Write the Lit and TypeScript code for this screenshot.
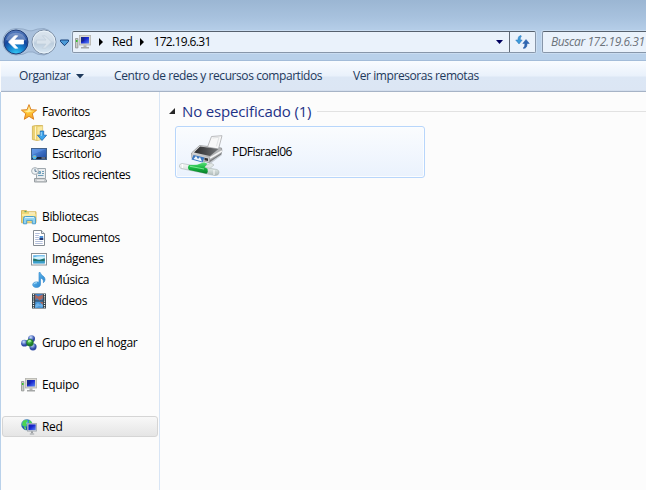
import { LitElement, html, css, svg, nothing } from "lit";
import { customElement, property } from "lit/decorators.js";

const monitor = svg`
  <path d="M.5 4.500h2.400v9.400H.5z" fill="#c9cbc7" stroke="#8e918f" stroke-width=".8"/>
  <path d="M1 6h1.500v2H1z" fill="#35c52b"/>
  <rect x="4.400" y="1.400" width="11.200" height="9.600" fill="#d9d7cf" stroke="#b3b3ae" stroke-width=".8"/>
  <rect x="6" y="3" width="8" height="6.500" fill="url(#scr)"/>
  <path d="M6 3h3.200v3.900L6 8z" fill="#1a2a8c"/>
  <path d="M8.500 11.300h3V13h-3z" fill="#b5b5b0"/><path d="M6 13h8v1.500H6z" fill="#a5a7a7"/>`;

const icons: Record<string, unknown> = {
  star: svg`<path d="M8 .6l2 5.100 5.600.4-4.300 3.600 1.400 5.600L8 12.300l-4.700 3 1.400-5.600L.4 6.100 6 5.700z" fill="url(#gold)" stroke="#dd8422" stroke-width="1" stroke-linejoin="round"/><path d="M8 3.200l1.200 3.500 3 .3-5.400 1.500-3.300-1.400 3.200-.4z" fill="#fff3ae" opacity=".85"/>`,
  downloads: svg`<path d="M1.400 1.200L4.500.500h7.100v13.800l-5.600 1.200-4.600-1z" fill="#ecd274" stroke="#cfb050" stroke-width=".8"/><path d="M6.500 2.200l5-1v12.500l-5 1.500z" fill="#f9e9a0"/><path d="M4.500 1.500v13" stroke="#fff5c7"/><path d="M9.300 6h3.400v4.200h2.900L11 15.500l-4.600-5.300h2.900z" fill="#3ba4ec" stroke="#1c67b3" stroke-width=".8"/><path d="M10.200 7v4" stroke="#a2dbff"/>`,
  desktop: svg`<rect x=".5" y="2.500" width="15" height="11" fill="url(#desk)" stroke="#44638b"/><path d="M1 11h14v2H1z" fill="#17243e"/><path d="M1 3h14L1 9z" fill="#76aaf2" opacity=".4"/><circle cx="3.500" cy="11.200" r="2.100" fill="#4bbdf0"/><path d="M2.200 11.200h1V9.600zM3.500 10h1.300v1.200z" fill="#ff9e37"/><path d="M10.500 12h4" stroke="#c7d3e3" stroke-width=".8"/>`,
  recent: svg`<path d="M5.500 1.500h9v10h-9z" fill="#e9ecee" stroke="#9ea7ad"/><path d="M3.500 11.500h10l2 1.500v2h-12z" fill="#c9cdd0" stroke="#999fa3"/><path d="M7.500 4.500h2v2h-2z" stroke="#6c9db9" fill="#8fb9d1"/><path d="M7 8.500h5.500M11 4.500h2M11 6.500h2" stroke="#6c9db9"/><circle cx="4" cy="4" r="3.400" fill="#f0f4f6" stroke="#a8b0b6"/><path d="M4 1.800V4.300h1.800" fill="none" stroke="#4d6c88" stroke-width=".9"/><path d="M6 13.300h7" stroke="#f5f5f5"/>`,
  libraries: svg`<path d="M.5 4V1.600h5l1 1.200h8.500v11H.5z" fill="#f1d978" stroke="#d5b863"/><path d="M1 5h13.500v2H1z" fill="#fbeca4"/><path d="M3.500 2.700h2" stroke="#3b9c67"/><path d="M8 4h6" stroke="#fff"/><path d="M2.500 14.800V9.300Q2.500 7.500 4.500 7.500h8q2 0 2 1.800v5.500h-3.200v-3.400H5.700v3.400z" fill="#91d2ef" stroke="#4d9fcd"/><path d="M4 8.600h9" stroke="#dcf6ff"/>`,
  documents: svg`<path d="M2.500.5h8l3 3v12h-11z" fill="#fff" stroke="#858c93"/><path d="M10.500.5v3h3" fill="#dfe8f0" stroke="#858c93"/><path d="M4.200 3.500h4.600M4.200 5.500h3.600M4.200 7.500h3.600M4.200 9.500h3.600M4.200 11.500h7.500M4.200 13.500h7.500" stroke="#a9b7d6" stroke-width=".9"/><rect x="8.600" y="6" width="3.600" height="4" fill="#4d8fd8"/><path d="M8.600 8h3.600v2H8.600z" fill="#243a73"/>`,
  pictures: svg`<rect x=".5" y="2.500" width="15" height="11.500" fill="#fff" stroke="#8b9196"/><rect x="2.200" y="4.200" width="11.600" height="8.200" fill="#5fb4ea"/><path d="M2.200 6.500Q8 4.500 13.800 5.500v2L8 8.500 2.200 8z" fill="#d6f3fb"/><path d="M2.200 7.600c3 .3 3.500 1.400 6 1.400 2.200 0 3.500-1.700 5.600-1.400v2.800H2.200z" fill="#257468"/><path d="M2.200 10.300h11.600v2.100H2.200z" fill="#3b9fcb"/>`,
  music: svg`<path d="M8 .5h1.200c.4 3 4.500 3.300 4.800 6.500.1 1.400-.5 2.800-1.600 3.700.5-2.700-.8-4-2.900-4.700v6.200c0 2.200-1.900 3.300-4 3.300-2 0-3.800-1-3.800-2.800 0-2.300 3.500-3.500 6.300-2.400z" fill="url(#note)" stroke="#3d8fd0" stroke-width=".7"/><path d="M3 12.200c.5-1 1.900-1.500 3-1.400" stroke="#b7e8ff" fill="none"/>`,
  videos: svg`<rect x="1" y=".5" width="14" height="15" fill="#33414a"/><path d="M2.500 1v14M13.500 1v14" stroke="#e8eef0" stroke-width="1.200" stroke-dasharray="1.200 1"/><rect x="4.200" y="1" width="7.600" height="6.500" fill="#3e80c6"/><rect x="4.200" y="8.500" width="7.600" height="6.500" fill="#4a97d8"/><path d="M4.200 1.500l3 2 4.600-2v4L8.500 7.500 6 5 4.200 7z" fill="#b0685c"/><path d="M4.200 12l2.800-2 2 2 2.800-2v4l-3.800-1-3.800 2z" fill="#6fb4ea"/><path d="M9 9h2.800v3z" fill="#ad6251"/>`,
  homegroup: svg`<circle cx="10.500" cy="3.700" r="3.500" fill="url(#ball)"/><circle cx="3.500" cy="8.200" r="3.400" fill="url(#ball)"/><circle cx="12" cy="11.800" r="3.600" fill="url(#ball)"/><circle cx="8.900" cy="7.700" r="3.500" fill="url(#green)" stroke="#26742e" stroke-width=".5"/><path d="M7.200 6.300q1.500-1.500 3 0" stroke="#d1ffc1" fill="none"/>`,
  computer: monitor,
  network: svg`<circle cx="5.800" cy="5.700" r="5.300" fill="url(#globe)" stroke="#3976a8" stroke-width=".5"/><path d="M2 2q3-2 5 0L5 4l1 2-2 2-3-2zM8 1q3 1 3 4L8 4z" fill="#4bd351"/><path d="M3 8l2 .5v2.300q-2-.5-2-2.800z" fill="#70dc61"/><rect x="6.500" y="4.500" width="9" height="7.600" fill="#d6d9da" stroke="#9da5ab" stroke-width=".8"/><rect x="7.400" y="5.400" width="7.300" height="5.700" fill="url(#scr)"/><path d="M10 12.300h2v2h-2z" fill="#9ca0a4"/><path d="M8.800 15h4.400" stroke="#9ca0a4"/>`,
};

@customElement("shell-icon")
export class ShellIcon extends LitElement {
  @property() name = "";
  static styles = css`
    :host { display: block; width: 16px; height: 16px; flex: none; }
    svg { display: block; }
  `;
  render() {
    return html`<svg width="16" height="16" viewBox="0 0 16 16">
      <defs>
        <linearGradient id="gold" x2="0" y2="1"><stop stop-color="#fff0a0"/><stop offset=".55" stop-color="#ffc634"/><stop offset="1" stop-color="#f39a25"/></linearGradient>
        <linearGradient id="desk" x2="1" y2="1"><stop stop-color="#5c93e6"/><stop offset="1" stop-color="#1c4aa0"/></linearGradient>
        <linearGradient id="scr" x2="1" y2="1"><stop stop-color="#1020a0"/><stop offset=".45" stop-color="#1928cf"/><stop offset="1" stop-color="#5d86f4"/></linearGradient>
        <linearGradient id="note" x2="1" y2="1"><stop stop-color="#72c7f5"/><stop offset="1" stop-color="#1c78c7"/></linearGradient>
        <radialGradient id="ball" cx=".4" cy=".3"><stop stop-color="#d8e5ff"/><stop offset=".45" stop-color="#7e9bdb"/><stop offset="1" stop-color="#2f48a5"/></radialGradient>
        <radialGradient id="green" cx=".4" cy=".3"><stop stop-color="#a9f29a"/><stop offset=".5" stop-color="#3eae42"/><stop offset="1" stop-color="#1c7a2d"/></radialGradient>
        <radialGradient id="globe" cx=".35" cy=".3"><stop stop-color="#aeeefe"/><stop offset=".5" stop-color="#3da7e1"/><stop offset="1" stop-color="#1554a8"/></radialGradient>
      </defs>${icons[this.name] ?? nothing}</svg>`;
  }
}

interface Item { icon: string; label: string; cls?: string; }
const groups: Item[][] = [
  [
    { icon: "star", label: "Favoritos" },
    { icon: "downloads", label: "Descargas", cls: "child" },
    { icon: "desktop", label: "Escritorio", cls: "child" },
    { icon: "recent", label: "Sitios recientes", cls: "child" },
  ],
  [
    { icon: "libraries", label: "Bibliotecas" },
    { icon: "documents", label: "Documentos", cls: "child" },
    { icon: "pictures", label: "Imágenes", cls: "child" },
    { icon: "music", label: "Música", cls: "child" },
    { icon: "videos", label: "Vídeos", cls: "child" },
  ],
  [{ icon: "homegroup", label: "Grupo en el hogar" }],
  [{ icon: "computer", label: "Equipo" }],
  [{ icon: "network", label: "Red", cls: "selected" }],
];

@customElement("app-root")
export class AppRoot extends LitElement {
  static styles = css`
    :host { display: flex; flex-direction: column; width: 646px; height: 490px; overflow: hidden; box-sizing: border-box; font: 12px/21px "Open Sans", "Noto Sans", sans-serif; letter-spacing: -0.36px; color: #000; background: #fcfcfc; white-space: nowrap; }
    svg { display: block; flex: none; }
    .top { height: 61px; box-sizing: border-box; padding: 27px 0 0 1px; display: flex; border-bottom: 1px solid #a3bcd9; background: linear-gradient(#9bb6d3, #a8c2de 18px, #b9d1eb 34px, #b9d1ea); }
    .address { flex: none; margin: 4px 0 0 1px; width: 464px; height: 22px; box-sizing: border-box; border: 1px solid #8796a9; border-top-color: #56616e; border-radius: 2px; background: #eaf2fb; display: flex; align-items: center; box-shadow: 0 0 0 1px #c9dcf0; line-height: 20px; }
    .address shell-icon { margin-left: 2px; }
    .arrow { margin: 0 9px 0 8px; }
    .ip { letter-spacing: -0.65px; }
    .gap { flex: 1; }
    .refresh { width: 25px; height: 20px; border-left: 1px solid #606a76; display: flex; align-items: center; justify-content: center; margin-left: 6px; }
    .search { margin: 4px 0 0 6px; width: 130px; height: 22px; flex: none; box-sizing: border-box; border: 1px solid #8796a9; border-top-color: #56616e; border-radius: 2px; background: #eaf2fb; box-shadow: 0 0 0 1px #c9dcf0; padding-left: 8px; line-height: 20px; font-style: italic; color: #6d747c; letter-spacing: -0.42px; }
    .bar { height: 31px; box-sizing: border-box; margin-left: 1px; border-top: 1px solid #f8fcff; border-bottom: 1px solid #a6b3c6; background: linear-gradient(#f8fbff, #e9f1fb 14px, #dce7f5 15px, #dce6f4 28px, #cbd7e8); display: flex; align-items: center; padding-left: 18px; color: #1e395b; line-height: 28px; letter-spacing: -0.42px; }
    .bar span { margin-top: -1px; }
    .organize { width: 52px; }
    .caret { margin: 0 30px 0 5px; }
    .centro { width: 239px; }
    .main { flex: 1; display: flex; border-left: 1px solid #b9d1ea; min-height: 0; }
    .side { width: 159px; box-sizing: border-box; border-right: 1px solid #d8e5f5; padding: 9px 1px 0; display: flex; flex-direction: column; gap: 21px; }
    .row { height: 21px; box-sizing: border-box; padding-left: 19px; display: flex; align-items: center; gap: 5px; }
    .child { padding-left: 29px; }
    .selected { border: 1px solid #d5d5d5; border-radius: 3px; background: linear-gradient(#f8f8f8, #e5e5e5); padding-left: 18px; }
    .content { flex: 1; padding: 9px 0 0 9px; }
    .head { height: 20px; display: flex; align-items: center; font-size: 15px; line-height: 20px; color: #1e3287; letter-spacing: -0.15px; }
    .head svg { margin-right: 7px; }
    .rule { height: 1px; background: #e2e2e2; flex: 1; margin-left: 6px; }
    .tile { margin: 5px 0 0 6px; width: 250px; height: 52px; box-sizing: border-box; border: 1px solid #b8d6fb; border-radius: 3px; background: linear-gradient(#fafcfe, #eaf2fd); box-shadow: inset 0 0 0 1px #fbfdff; display: flex; align-items: center; letter-spacing: -0.55px; }
    .tile svg { margin-right: 8px; }
    .tile span { margin-top: -2px; }
  `;

  render() {
    return html`
      <div class="top">
        <svg width="70" height="32" viewBox="0 0 70 32">
          <defs>
            <radialGradient id="back" cx=".5" cy="1" r=".95"><stop stop-color="#39cdf4"/><stop offset=".35" stop-color="#1686d1"/><stop offset=".65" stop-color="#14469e"/><stop offset="1" stop-color="#5479bb"/></radialGradient>
            <linearGradient id="fwd" x2="0" y2="1"><stop stop-color="#dbe5ee"/><stop offset=".45" stop-color="#d0dce8"/><stop offset=".55" stop-color="#bccddd"/><stop offset="1" stop-color="#dbeaf5"/></linearGradient>
          </defs>
          <path d="M15 1.500q8 0 13 2.300h3Q36 1.500 43 1.500A13.500 13.500 0 0 1 43 28q-7 0-11-3h-5q-4 3-12 3A13 13 0 0 1 15 1.500z" fill="#a9c0dc" stroke="#93abc8"/>
          <circle cx="15" cy="15" r="12" fill="url(#back)" stroke="#213e78"/>
          <path d="M5 13A10.500 10.500 0 0 1 25 13Q15 17 5 13z" fill="#fff" opacity=".28"/>
          <path d="M7.500 15l6.200-6.200h3L13 13h9.500v4H13l3.700 4.200h-3z" fill="#fff" stroke="#fff" stroke-linejoin="round" stroke-width=".8"/>
          <circle cx="43" cy="15" r="12" fill="url(#fwd)" stroke="#7d8fa6"/>
          <circle cx="43" cy="15" r="11" fill="none" stroke="#eef6fc" stroke-width=".8"/>
          <path d="M50.500 15l-6.200-6.200h-3L45 13h-9.500v4H45l-3.700 4.200h3z" fill="#d9e3ec" stroke="#c3d0dd" stroke-width=".8"/>
          <path d="M59.500 13h8v1.500L63.500 18.700l-4-4.200z" fill="#4c9bd8" stroke="#17417b"/>
        </svg>
        <div class="address">
          <shell-icon name="computer"></shell-icon>
          <svg class="arrow" width="4" height="8"><path d="M0 0l4 4-4 4z"/></svg>
          <span>Red</span>
          <svg class="arrow" width="4" height="8"><path d="M0 0l4 4-4 4z"/></svg>
          <span class="ip">172.19.6.31</span>
          <span class="gap"></span>
          <svg width="7" height="4"><path d="M0 0h7L3.500 4z" fill="#00005e"/></svg>
          <div class="refresh"><svg width="15" height="14" viewBox="0 0 15 14"><path d="M6 .5C3.500.8 3 2.500 3 5H.7L4 9l3.200-4H5.300c0-1.700 0-2.600 1-3.500z" fill="#3d9bd9" stroke="#2a75bd" stroke-width=".5"/><path d="M8.500 13.500c3-.3 3.500-2 3.500-5h2.300L11 4.500l-3.200 4h2c0 2.200 0 3-1.300 4z" fill="#2f67b2" stroke="#285ba4" stroke-width=".5"/></svg></div>
        </div>
        <div class="search">Buscar 172.19.6.31</div>
      </div>
      <div class="bar">
        <span class="organize">Organizar</span>
        <svg class="caret" width="8" height="5"><path d="M0 0h8L4 4.500z" fill="#1e395b"/></svg>
        <span class="centro">Centro de redes y recursos compartidos</span>
        <span>Ver impresoras remotas</span>
      </div>
      <div class="main">
        <div class="side">
          ${groups.map((g) => html`<div>${g.map((i) => html`<div class="row ${i.cls ?? ""}"><shell-icon name=${i.icon}></shell-icon><span>${i.label}</span></div>`)}</div>`)}
        </div>
        <div class="content">
          <div class="head">
            <svg width="6" height="6"><path d="M6 0v6H0z" fill="#262626"/></svg>
            <span>No especificado (1)</span><span class="rule"></span>
          </div>
          <div class="tile">
            <svg width="48" height="50" viewBox="0 0 48 50">
              <defs>
                <linearGradient id="body" x2="1" y2="1"><stop stop-color="#f2f2f2"/><stop offset="1" stop-color="#8a8c8e"/></linearGradient>
                <linearGradient id="lid" x2="1" y2="0"><stop stop-color="#2c2d2e"/><stop offset=".5" stop-color="#4c4d4f"/><stop offset="1" stop-color="#77797b"/></linearGradient>
                <linearGradient id="pipe" x2="0" y2="1"><stop stop-color="#5fe07c"/><stop offset=".5" stop-color="#16b840"/><stop offset="1" stop-color="#07792a"/></linearGradient>
                <linearGradient id="glass" x2="0" y2="1"><stop stop-color="#f8fafa"/><stop offset=".55" stop-color="#d6dfdd"/><stop offset="1" stop-color="#aeb9b8"/></linearGradient>
              </defs>
              <path d="M30 34l16-9v3L34 37z" fill="#9ca2a5" opacity=".5"/>
              <path d="M15.500 26l8-7.500 22 2.500q1 3-.5 6L33 35.500l-17-4z" fill="url(#body)" stroke="#888b8d" stroke-width=".7"/>
              <path d="M31.500 20l4-10.500 10.500-.8-3.500 13.300z" fill="#f8f8f8" stroke="#a9abad" stroke-width=".8"/>
              <path d="M36.500 11l6.500-.7-2.500 9" fill="none" stroke="#e1e3e4"/>
              <path d="M18 25.500l6-6 18.500 2.500-8.500 7z" fill="url(#lid)"/>
              <path d="M16 26.500L33 30.500v4.800L16 31.300z" fill="#c8cacc"/>
              <path d="M34 31l12-7" stroke="#f5f5f5" stroke-width="1.500"/>
              <path d="M34 34l11-7" stroke="#6e7072" stroke-width=".8"/>
              <path d="M17.500 28l11 2.500-2 5L15.500 32.500z" fill="#3c78c0"/><path d="M17.500 32l2.500-3 2 3 2-2 2 4.500z" fill="#edf5fb"/><path d="M28.500 30.700l3.500.8v2.500l-3.500-.8z" fill="#333"/>
              <path d="M27 40l8-4 3 2-6 5z" fill="#e0e6e5" stroke="#b1b8b8" stroke-width=".6"/>
              <path d="M6 36.500l35 6q2.500 1 2 3.500t-4 2.500L5 41.500q-2-1-1.500-3t2.500-2z" fill="url(#glass)" stroke="#a7b3b2" stroke-width=".6"/>
              <path d="M13 38l8-.3 7-2.500 3.500 1.500-3 3.500 3 1.500q1 3-1 5L13 43q-2-2.500 0-5z" fill="url(#pipe)"/>
              <path d="M14 39.300l14 2.700" stroke="#86ec9b" stroke-width=".9"/>
              <path d="M6.500 37v4M38 43v5" stroke="#fff"/>
            </svg>
            <span>PDFisrael06</span>
          </div>
        </div>
      </div>`;
  }
}
